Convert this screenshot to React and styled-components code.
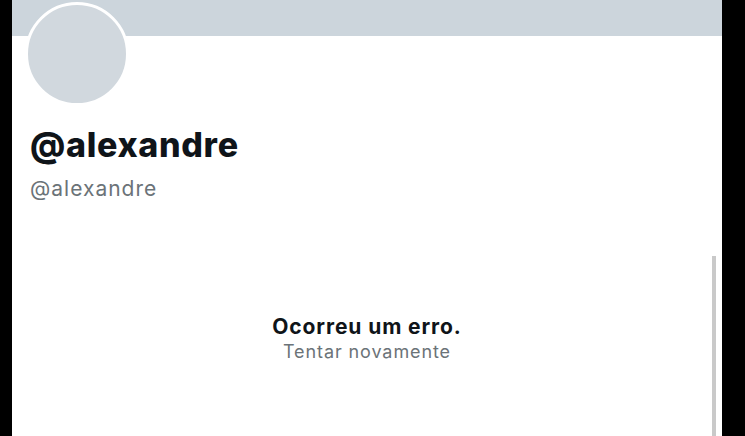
import React from 'react';
import styled, { createGlobalStyle } from 'styled-components';

const GlobalStyle = createGlobalStyle`
  html, body {
    margin: 0;
    padding: 0;
    background: #000;
    overflow: hidden;
  }
`;

const Screen = styled.div`
  display: flex;
  width: 745px;
  height: 436px;
  background: #000;
  font-family: Inter, 'Noto Sans', sans-serif;
`;

const LeftEdge = styled.div`
  width: 12px;
  flex: 0 0 12px;
`;

const Panel = styled.div`
  position: relative;
  flex: 0 0 710px;
  background: #fff;
  display: flex;
  flex-direction: column;
  overflow: hidden;
`;

const Banner = styled.div`
  height: 36px;
  flex: 0 0 36px;
  background: #ccd5dc;
`;

const Header = styled.div`
  padding: 0 0 0 18px;
  margin-top: -34px;
  display: flex;
  flex-direction: column;
`;

const Avatar = styled.div`
  width: 98px;
  height: 98px;
  border-radius: 50%;
  background: #d1d8de;
  border: 3px solid #fff;
  margin-left: -5px;
`;

const Name = styled.h1`
  margin: 19px 0 0;
  font-size: 34px;
  font-weight: 800;
  color: #0f1419;
  letter-spacing: 0.7px;
  line-height: 40px;
`;

const Handle = styled.div`
  margin-top: 11px;
  font-size: 21px;
  color: #6b7378;
  line-height: 26px;
  letter-spacing: 1px;
`;

const ErrorBox = styled.div`
  margin-top: 112px;
  display: flex;
  flex-direction: column;
  align-items: center;
`;

const ErrorTitle = styled.div`
  font-size: 21px;
  font-weight: 700;
  color: #0f1419;
  line-height: 26px;
  letter-spacing: 0.9px;
`;

const Retry = styled.div`
  font-size: 18px;
  color: #6b7378;
  line-height: 24px;
  letter-spacing: 0.9px;
`;

const Scrollbar = styled.div`
  position: absolute;
  right: 6px;
  top: 256px;
  bottom: 0;
  width: 4px;
  background: #c9c9c9;
`;

export default function App() {
  return (
    <>
      <GlobalStyle />
      <Screen>
        <LeftEdge />
        <Panel>
          <Banner />
          <Header>
            <Avatar />
            <Name>@alexandre</Name>
            <Handle>@alexandre</Handle>
          </Header>
          <ErrorBox>
            <ErrorTitle>Ocorreu um erro.</ErrorTitle>
            <Retry>Tentar novamente</Retry>
          </ErrorBox>
          <Scrollbar />
        </Panel>
      </Screen>
    </>
  );
}
